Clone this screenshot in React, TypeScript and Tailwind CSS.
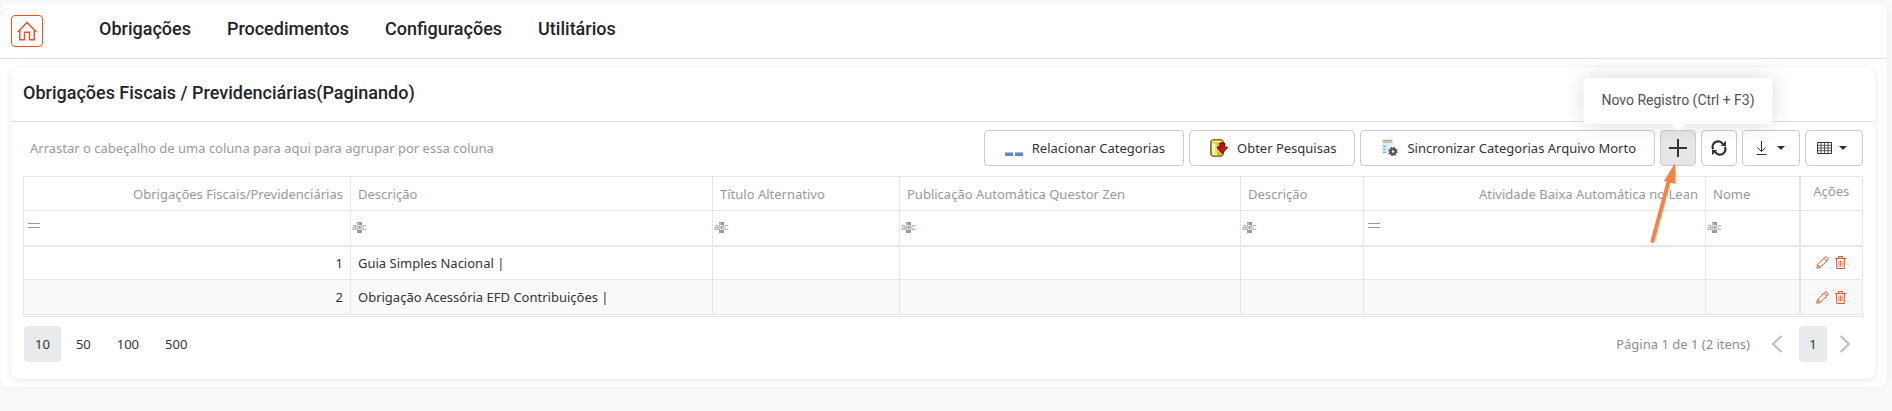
import React from "react";

type Column = { title: string; width: string; numeric?: boolean };

const columns: Column[] = [
  { title: "Obrigações Fiscais/Previdenciárias", width: "w-[327px]", numeric: true },
  { title: "Descrição", width: "w-[362px]" },
  { title: "Título Alternativo", width: "w-[187px]" },
  { title: "Publicação Automática Questor Zen", width: "w-[341px]" },
  { title: "Descrição", width: "w-[123px]" },
  { title: "Atividade Baixa Automática no Lean", width: "w-[342px]", numeric: true },
  { title: "Nome", width: "w-[94px]" },
];

const rows = [
  { id: 1, description: "Guia Simples Nacional |" },
  { id: 2, description: "Obrigação Acessória EFD Contribuições |" },
];

const menu = ["Obrigações", "Procedimentos", "Configurações", "Utilitários"];
const pageSizes = [10, 50, 100, 500];

const buttonBase =
  "flex h-9 items-center rounded border border-[#c9cdcf] text-[#333] whitespace-nowrap";

function HomeIcon() {
  return (
    <svg width="20" height="20" viewBox="0 0 20 20" fill="none" stroke="#e8501e" strokeWidth="1.4">
      <path d="M0.700 11 10 1.500l9.300 9.500M2.800 9.200v9.600h4.700v-7.600h5v7.600h4.700V9.200" />
    </svg>
  );
}

function ListIcon() {
  return (
    <svg width="18" height="18" viewBox="0 0 18 18">
      <path fill="#5b86e8" d="M0 13h8v4H0zM10 13h8v4h-8z" />
      <path fill="#9db9f5" d="M0 13h8v1H0zM10 13h8v1h-8z" />
    </svg>
  );
}

function DatabaseIcon() {
  return (
    <svg width="18" height="18" viewBox="0 0 18 18">
      <path d="M2.500.8h9l1.700 1.500v13.400l-1.700 1.500h-9L.8 15.700V2.300z" fill="#d9bd1e" stroke="#4a4420" />
      <path d="M2 4.500h3V16H2.500z" fill="#fffbc8" />
      <path d="M5 4.500h2V16.500H5z" fill="#f2df55" />
      <path d="M2 1.800h9.800v1.700H2z" fill="#f7ea80" />
      <path d="M10 4h4.500v4.200h3L12.300 14.500 7 8.200h3z" fill="#f50000" stroke="#300" />
    </svg>
  );
}

function ArchiveIcon() {
  return (
    <svg width="17" height="18" viewBox="0 0 17 18">
      <path d="M1 0h11v15H1z" fill="#e3eef7" />
      <path d="M2 1h9v1.500H2z" fill="#ef8d7a" />
      <path d="M2 2.500h9V4H2z" fill="#8fd6a8" />
      <path d="M2 6.500h3V8H2zM2 9.500h3V11H2zM2 12.500h3V14H2z" fill="#7fbdf0" />
      <circle cx="12" cy="12.500" r="2.500" fill="none" stroke="#555" strokeWidth="2.400" />
      <circle cx="12" cy="12.500" r="4" fill="none" stroke="#555" strokeWidth="1.400" strokeDasharray="1.570 1.570" />
    </svg>
  );
}

function PlusIcon() {
  return (
    <svg width="18" height="18" viewBox="0 0 18 18">
      <path d="M8 0h2v8h8v2h-8v8H8v-8H0V8h8z" fill="#333" />
    </svg>
  );
}

function RefreshIcon() {
  return (
    <svg width="16" height="16" viewBox="0 0 16 16" fill="none" stroke="#333" strokeWidth="2.200">
      <path d="M2.200 9.200A5.200 5.200 0 0 1 11.800 4.200M13.800 6.800A5.200 5.200 0 0 1 4.200 11.800" />
      <path d="M15 .8V6H9.800zM1 15.200V10h5.200z" fill="#333" stroke="none" />
    </svg>
  );
}

function DownloadIcon() {
  return (
    <svg width="11" height="14" viewBox="0 0 11 14" fill="none" stroke="#333">
      <path d="M5.500 0v10.500M1.500 6.500l4 4 4-4M.5 13.500h10" />
    </svg>
  );
}

function GridIcon() {
  return (
    <svg width="15" height="12" viewBox="0 0 15 12" fill="none" stroke="#333">
      <path d="M.5.5h14v11H.5z" />
      <path d="M4 0v12M7.500 0v12M11 0v12M0 3.300h15M0 6h15M0 8.700h15" strokeWidth=".8" />
    </svg>
  );
}

function Caret() {
  return (
    <svg width="8" height="4" viewBox="0 0 8 4">
      <path d="M0 0h8L4 4z" fill="#333" />
    </svg>
  );
}

function PencilIcon() {
  return (
    <svg width="13" height="13" viewBox="0 0 13 13" fill="none" stroke="#e8501e">
      <path d="M.8 12.200l.9-3.600L9 1.300a1.300 1.300 0 0 1 1.900 0l.8.8a1.300 1.300 0 0 1 0 1.900l-7.300 7.300zM1.900 8.600l2.500 2.500M8 2.300 10.700 5" />
    </svg>
  );
}

function TrashIcon() {
  return (
    <svg width="11" height="13" viewBox="0 0 11 13" fill="none" stroke="#e8501e">
      <path d="M0 2.500h11M3.500 2V.5h4V2M1.500 2.500l.3 10h7.400l.3-10" />
      <path d="M4 4.500v6M5.500 4.500v6M7 4.500v6" strokeWidth=".8" />
    </svg>
  );
}

function Chevron({ direction }: { direction: "left" | "right" }) {
  return (
    <svg width="12" height="18" viewBox="0 0 12 18" fill="none" stroke="#bdbdbd" strokeWidth="2">
      <path d={direction === "left" ? "M10.500 1 2 9l8.500 8" : "M1.500 1 10 9l-8.500 8"} />
    </svg>
  );
}

function FilterIcon({ numeric }: { numeric?: boolean }) {
  if (numeric) {
    return (
      <svg width="12" height="6" viewBox="0 0 12 6" className="mb-1 ml-1">
        <path d="M0 .5h12M0 4.500h12" stroke="#959a9f" />
      </svg>
    );
  }
  return (
    <span className="ml-px flex items-center font-['Liberation_Sans',sans-serif] text-[9px] leading-[11px] text-[#8f959b]">
      a<span className="bg-[#959ba3] text-white">b</span>c
    </span>
  );
}

export default function App() {
  return (
    <div className="min-h-screen bg-[#f9fafb] pt-[3px] font-['Noto_Sans','Open_Sans',sans-serif] text-[13px] leading-5 text-[#333]">
      <div className="mr-[5px] rounded-lg bg-white pb-2 shadow-[0_0_6px_rgba(0,0,0,0.06)]">
        <header className="flex h-14 items-start border-b border-[#dee0e2] pl-[11px] font-['Roboto',sans-serif]">
          <a
            href="#inicio"
            aria-label="Início"
            className="mt-3 flex h-8 w-8 items-center justify-center rounded border border-[#e8501e]"
          >
            <HomeIcon />
          </a>
          <nav className="ml-14 mt-3 flex gap-9 text-[18px] font-medium leading-7 text-[#212529]">
            {menu.map((item) => (
              <a key={item} href="#menu">
                {item}
              </a>
            ))}
          </nav>
        </header>

        <main className="ml-[11px] mr-3 mt-2 rounded-lg bg-white pb-[17px] shadow-[0_1px_6px_rgba(0,0,0,0.10)]">
          <h1 className="border-b border-[#dcdedf] px-3 pb-[15px] pt-3 font-['Roboto',sans-serif] text-[18px] font-medium leading-[27px] text-[#212529]">
            Obrigações Fiscais / Previdenciárias(Paginando)
          </h1>

          <div className="flex items-center gap-[5px] pb-[10px] pl-[19px] pr-3 pt-2">
            <p className="grow text-[#959a9f]">
              Arrastar o cabeçalho de uma coluna para aqui para agrupar por essa coluna
            </p>
            <button className={`${buttonBase} gap-[9px] pl-5 pr-[18px]`}>
              <ListIcon />
              Relacionar Categorias
            </button>
            <button className={`${buttonBase} gap-[9px] pl-5 pr-[18px]`}>
              <DatabaseIcon />
              Obter Pesquisas
            </button>
            <button className={`${buttonBase} gap-[9px] pl-5 pr-[18px]`}>
              <ArchiveIcon />
              Sincronizar Categorias Arquivo Morto
            </button>
            <div className="relative">
              <button
                aria-label="Novo Registro"
                aria-describedby="new-record-tip"
                className={`${buttonBase} w-9 justify-center bg-[#e6e6e6]`}
              >
                <PlusIcon />
              </button>
              <div
                id="new-record-tip"
                role="tooltip"
                className="absolute bottom-[42px] left-1/2 z-10 -translate-x-1/2 whitespace-nowrap rounded bg-white px-[18px] pb-[14px] pt-3 font-['Roboto',sans-serif] text-[14px] text-[#4f5254] shadow-[0_0_20px_rgba(0,0,0,0.15)]"
              >
                Novo Registro (Ctrl + F3)
                <svg width="14" height="7" viewBox="0 0 14 7" className="absolute left-1/2 top-full -translate-x-1/2">
                  <path d="M0 0h14L7 7z" fill="#fff" />
                </svg>
              </div>
              <svg
                width="30"
                height="84"
                viewBox="0 0 30 84"
                className="pointer-events-none absolute -left-3 top-8 z-10"
              >
                <path d="M4.500 79 21 18" stroke="#ff7f3f" strokeWidth="4" strokeLinecap="round" />
                <path d="M27 1 27.500 22 16 19z" fill="#ff7f3f" />
              </svg>
            </div>
            <button aria-label="Atualizar" className={`${buttonBase} w-9 justify-center`}>
              <RefreshIcon />
            </button>
            <button aria-label="Exportar" className={`${buttonBase} w-[58px] gap-[10px] pl-[13px]`}>
              <DownloadIcon />
              <Caret />
            </button>
            <button aria-label="Colunas" className={`${buttonBase} w-[58px] gap-[7px] pl-[11px]`}>
              <GridIcon />
              <Caret />
            </button>
          </div>

          <div className="ml-3 mr-3 border-b border-[#e5e6e7] pb-px">
            <table className="w-full table-fixed border-collapse border border-[#e5e6e7]">
              <thead>
                <tr className="h-[34px] border-b border-[#e5e6e7] text-[#959a9f]">
                  {columns.map((column, i) => (
                    <th
                      key={i}
                      className={`${column.width} whitespace-nowrap border-r border-[#e5e6e7] px-[7px] font-normal ${column.numeric ? "text-right" : "text-left"}`}
                    >
                      {column.title}
                    </th>
                  ))}
                  <th className="w-[63px] border-l-2 border-[#e5e6e7] pb-1.5 text-center font-normal">Ações</th>
                </tr>
                <tr className="h-[35px] border-b-2 border-[#e5e6e7]">
                  {columns.map((column, i) => (
                    <td key={i} className="border-r border-[#e5e6e7]">
                      <FilterIcon numeric={column.numeric} />
                    </td>
                  ))}
                  <td className="border-l-2 border-[#e5e6e7]" />
                </tr>
              </thead>
              <tbody>
                {rows.map((row) => (
                  <tr key={row.id} className="h-[34px] border-b border-[#e5e6e7] last:h-[35px] even:bg-[#fafafa]">
                    <td className="border-r border-[#e5e6e7] px-[7px] text-right">{row.id}</td>
                    <td className="border-r border-[#e5e6e7] px-[7px]">{row.description}</td>
                    <td className="border-r border-[#e5e6e7]" />
                    <td className="border-r border-[#e5e6e7]" />
                    <td className="border-r border-[#e5e6e7]" />
                    <td className="border-r border-[#e5e6e7]" />
                    <td className="border-r border-[#e5e6e7]" />
                    <td className="border-l-2 border-[#e5e6e7]">
                      <div className="flex items-center justify-center gap-[6px]">
                        <button aria-label="Editar">
                          <PencilIcon />
                        </button>
                        <button aria-label="Excluir">
                          <TrashIcon />
                        </button>
                      </div>
                    </td>
                  </tr>
                ))}
              </tbody>
            </table>
          </div>

          <div className="ml-[13px] mr-3 mt-[9px] flex items-center justify-between">
            <div className="flex gap-1">
              {pageSizes.map((size) => (
                <button
                  key={size}
                  className={`h-9 rounded px-[11px] ${size === 10 ? "bg-[#e8eaeb]" : ""}`}
                >
                  {size}
                </button>
              ))}
            </div>
            <div className="flex items-center">
              <span className="text-[#8a8d90]">Página 1 de 1 (2 itens)</span>
              <button aria-label="Página anterior" className="ml-[21px]">
                <Chevron direction="left" />
              </button>
              <button className="ml-4 h-9 w-7 rounded bg-[#e8eaeb]">1</button>
              <button aria-label="Próxima página" className="ml-3 mr-3">
                <Chevron direction="right" />
              </button>
            </div>
          </div>
        </main>
      </div>
    </div>
  );
}
